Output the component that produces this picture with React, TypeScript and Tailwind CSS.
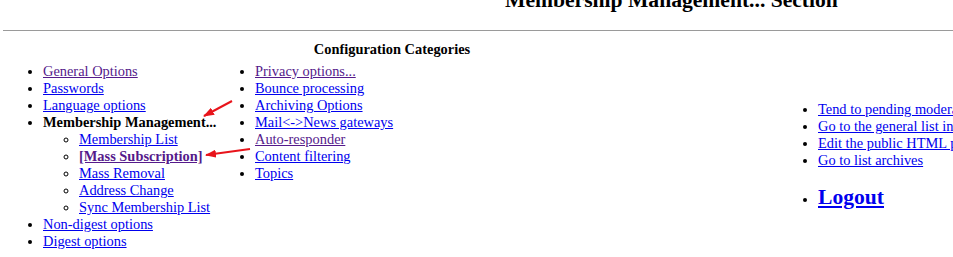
import type { ReactNode } from 'react';

const blue = 'text-[#0000ee] underline';
const visited = 'text-[#551a8b] underline';

function Item({ children, seen }: { children: ReactNode; seen?: boolean }) {
  return (
    <li>
      <a href="#" className={seen ? visited : blue}>
        {children}
      </a>
    </li>
  );
}

export default function App() {
  return (
    <div className="relative w-[953px] h-[257px] overflow-hidden bg-white text-black font-['Liberation_Serif',serif] text-[14.4px] leading-[17px]">
      {/* Page heading, scrolled partly out of view */}
      <h2 className="mt-[-12px] ml-[505px] whitespace-nowrap text-[21.6px] leading-[24px] font-bold">
        Membership Management... Section
      </h2>
      <div className="mt-[18px] ml-[3px] w-[950px] border-t border-[#9a9a9a]" />

      <div className="mt-[10px] flex items-start">
        {/* Configuration categories */}
        <div className="ml-[7px] w-[770px] shrink-0">
          <div className="text-center font-bold">Configuration Categories</div>
          <div className="mt-[5px] flex">
            <ul className="w-[212px] shrink-0 list-disc pl-[36px]">
              <Item seen>General Options</Item>
              <Item>Passwords</Item>
              <Item>Language options</Item>
              <li>
                <strong>Membership Management...</strong>
                <ul className="list-[circle] pl-[36px]">
                  <Item>Membership List</Item>
                  <li>
                    <a href="#" className={`${visited} font-bold`}>
                      [Mass Subscription]
                    </a>
                  </li>
                  <Item>Mass Removal</Item>
                  <Item>Address Change</Item>
                  <Item>Sync Membership List</Item>
                </ul>
              </li>
              <Item>Non-digest options</Item>
              <Item>Digest options</Item>
            </ul>
            <ul className="list-disc pl-[36px]">
              <Item seen>Privacy options...</Item>
              <Item>Bounce processing</Item>
              <Item>Archiving Options</Item>
              <Item>Mail&lt;-&gt;News gateways</Item>
              <Item seen>Auto-responder</Item>
              <Item>Content filtering</Item>
              <Item>Topics</Item>
            </ul>
          </div>
        </div>

        {/* Other list links */}
        <div className="ml-[5px] mt-[60px] whitespace-nowrap">
          <ul className="list-disc pl-[36px]">
            <Item>Tend to pending moderator requests</Item>
            <Item>Go to the general list information page</Item>
            <Item>Edit the public HTML pages and text files</Item>
            <Item>Go to list archives</Item>
          </ul>
          <ul className="mt-[16px] list-disc pl-[36px]">
            <li>
              <a href="#" className={`${blue} text-[21.6px] leading-[25px] font-bold`}>
                Logout
              </a>
            </li>
          </ul>
        </div>
      </div>

      {/* Red annotation arrows */}
      <svg className="pointer-events-none absolute left-0 top-0" width="953" height="257">
        <defs>
          <marker id="head" markerWidth="11" markerHeight="8" refX="10" refY="4" orient="auto" markerUnits="userSpaceOnUse">
            <path d="M0,0 L11,4 L0,8 z" fill="#e8141b" />
          </marker>
        </defs>
        <line x1="232" y1="101" x2="204" y2="116" stroke="#e8141b" strokeWidth="2" markerEnd="url(#head)" />
        <line x1="250" y1="149" x2="206" y2="155" stroke="#e8141b" strokeWidth="2" markerEnd="url(#head)" />
      </svg>
    </div>
  );
}
